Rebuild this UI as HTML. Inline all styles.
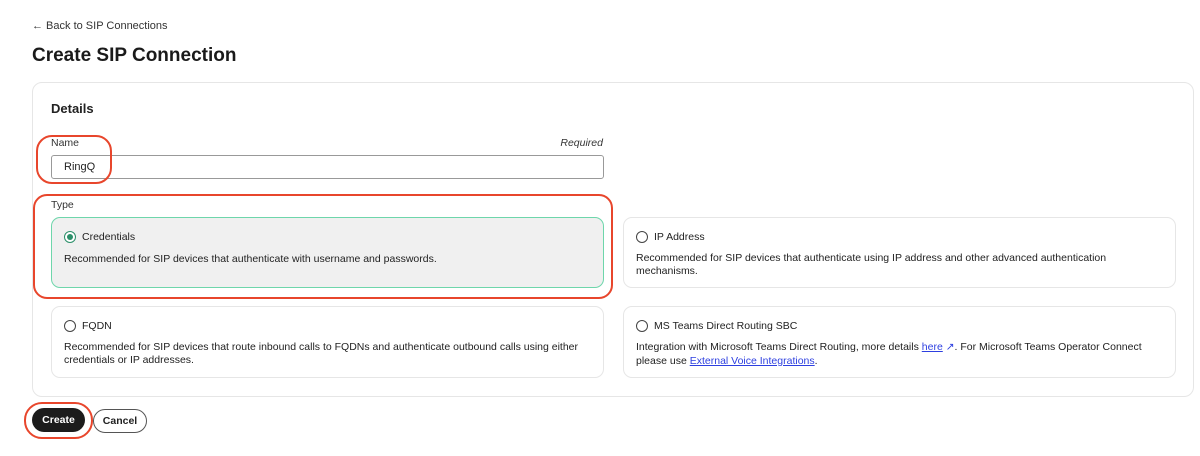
<!DOCTYPE html>
<html><head><style>
*{box-sizing:border-box;margin:0;padding:0}
body{width:1200px;height:456px;background:#fff;font-family:"Liberation Sans",Arial,sans-serif;color:#222;position:relative;overflow:hidden}
.a{position:absolute}
.back{left:32px;top:20px;font-size:11px;color:#333}
h1{position:absolute;left:32px;top:45px;font-size:19px;font-weight:bold;color:#1a1a1a}
.card{left:32px;top:82px;width:1162px;height:315px;border:1px solid #e6e6e6;border-radius:10px}
.opt{position:absolute;border:1px solid #e6e6e6;border-radius:9px;width:553px;height:72px;background:#fff}
.opt .t{position:absolute;left:30px;top:13px;font-size:10.5px;color:#222}
.opt .d{position:absolute;left:12px;top:34px;font-size:10.5px;line-height:12.5px;color:#222;width:500px}
.radio{position:absolute;left:12px;top:13px;width:12px;height:12px;border:1px solid #444;border-radius:50%;background:#fff}
.sel{background:#f0f0f0;border-color:#6ed6ab}
.sel .radio{border-color:#2b8f69}
.sel .radio:after{content:"";position:absolute;left:2px;top:2px;width:6px;height:6px;border-radius:50%;background:#2b8f69}
a{color:#2d3fe0;text-decoration:underline}
.red{position:absolute;border:2px solid #e8462c}
</style></head><body>
<div class="a back">← Back to SIP Connections</div>
<h1>Create SIP Connection</h1>
<div class="a card"></div>
<div class="a" style="left:51px;top:101px;font-size:13px;font-weight:bold;color:#222">Details</div>
<div class="a" style="left:51px;top:137px;font-size:10.5px;color:#333">Name</div>
<div class="a" style="left:540px;top:137px;width:63px;text-align:right;font-size:10.5px;font-style:italic;color:#333">Required</div>
<div class="a" style="left:51px;top:155px;width:553px;height:24px;border:1px solid #999;border-radius:3px;font-size:11px;padding:5px 12px;color:#222">RingQ</div>
<div class="a" style="left:51px;top:199px;font-size:10.5px;color:#333">Type</div>
<div class="opt sel" style="left:51px;top:217px;height:71px"><div class="radio"></div><div class="t">Credentials</div><div class="d" style="top:35px">Recommended for SIP devices that authenticate with username and passwords.</div></div>
<div class="opt" style="left:623px;top:217px;height:71px"><div class="radio"></div><div class="t">IP Address</div><div class="d">Recommended for SIP devices that authenticate using IP address and other advanced authentication mechanisms.</div></div>
<div class="opt" style="left:51px;top:306px"><div class="radio"></div><div class="t">FQDN</div><div class="d" style="width:530px">Recommended for SIP devices that route inbound calls to FQDNs and authenticate outbound calls using either credentials or IP addresses.</div></div>
<div class="opt" style="left:623px;top:306px"><div class="radio"></div><div class="t">MS Teams Direct Routing SBC</div><div class="d" style="line-height:14px;top:33px;width:520px">Integration with Microsoft Teams Direct Routing, more details <a>here</a> <span style="color:#2d3fe0">↗</span>. For Microsoft Teams Operator Connect please use <a>External Voice Integrations</a>.</div></div>
<div class="a" style="left:32px;top:408px;width:53px;height:24px;background:#1c1c1c;border-radius:12px;color:#fff;font-size:10.5px;font-weight:bold;text-align:center;line-height:24px">Create</div>
<div class="a" style="left:93px;top:409px;width:54px;height:24px;border:1px solid #555;border-radius:12px;color:#222;font-size:10.5px;font-weight:bold;text-align:center;line-height:22px">Cancel</div>
<div class="red" style="left:36px;top:135px;width:76px;height:49px;border-radius:16px"></div>
<div class="red" style="left:33px;top:194px;width:580px;height:105px;border-radius:14px"></div>
<div class="red" style="left:24px;top:402px;width:69px;height:37px;border-radius:18px"></div>
</body></html>
